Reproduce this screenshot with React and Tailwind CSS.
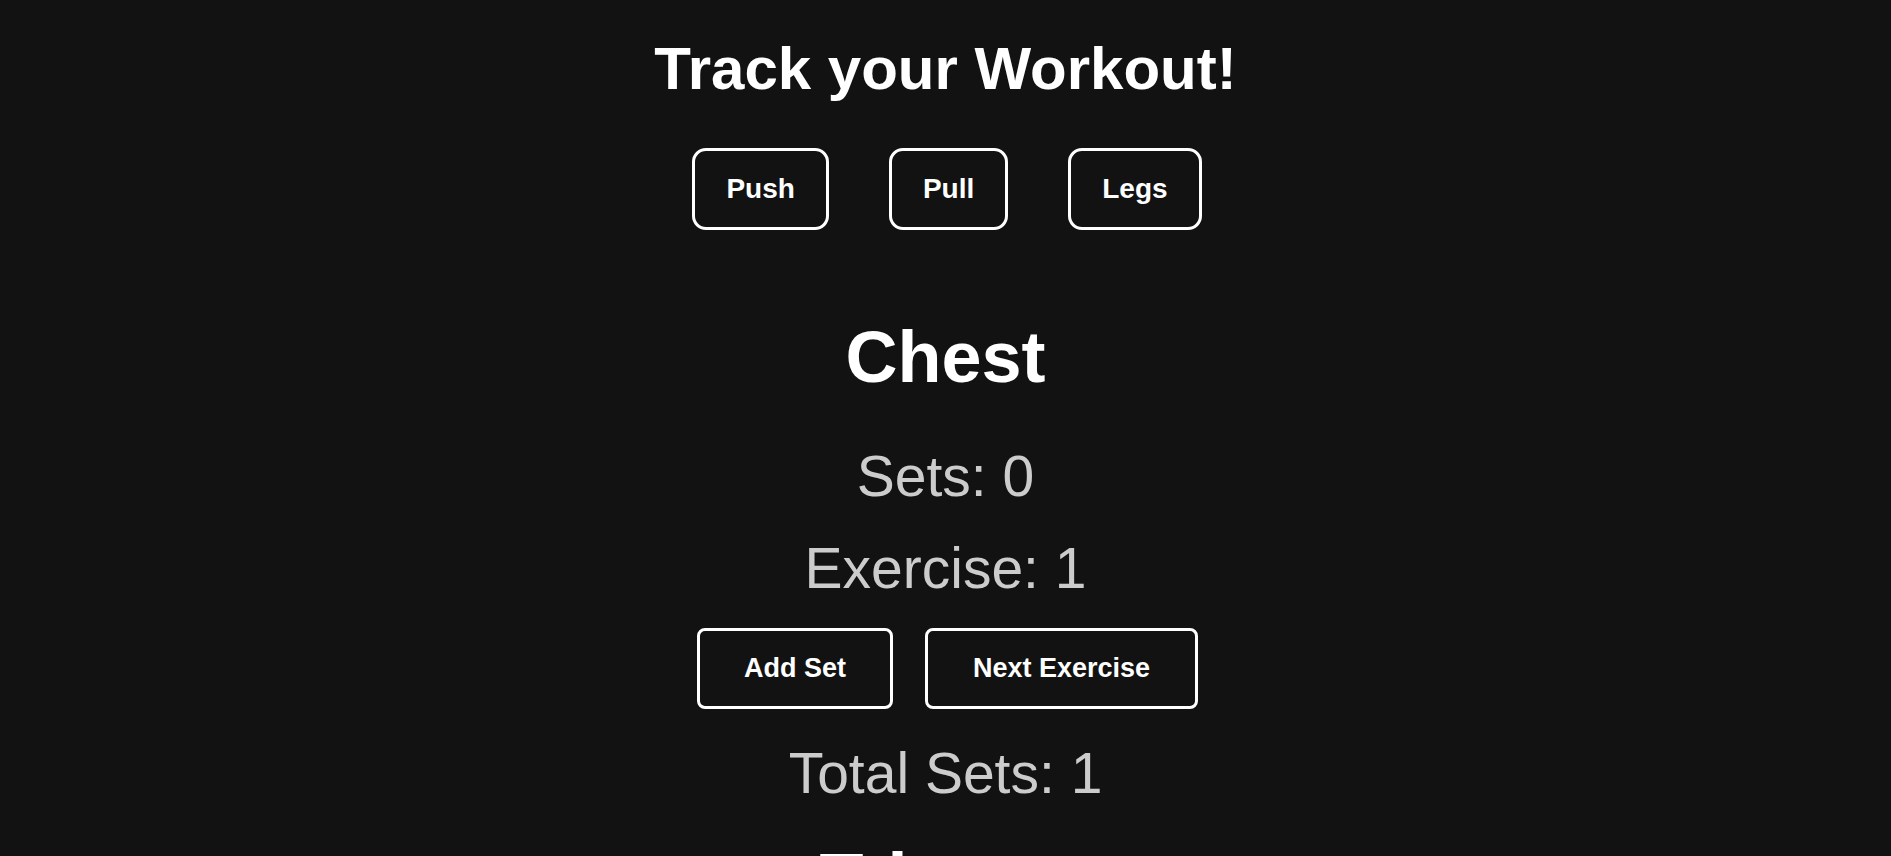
import { useState } from "react";

const SPLITS = ["Push", "Pull", "Legs"];

export default function App() {
  const [split, setSplit] = useState("Push");
  const [sets, setSets] = useState(0);
  const [exercise, setExercise] = useState(1);
  const [totalSets, setTotalSets] = useState(1);

  return (
    <div className="min-h-screen bg-[#121212] text-white font-['Liberation_Sans',Arial,sans-serif] flex flex-col items-center overflow-hidden">
      <h1 className="mt-[39px] text-[60px] leading-[60px] font-bold">
        Track your Workout!
      </h1>

      <div className="mt-[49px] flex gap-[60px] pl-[3px]">
        {SPLITS.map((s) => (
          <button
            key={s}
            onClick={() => setSplit(s)}
            className="border-[3px] border-white rounded-[14px] px-[31px] py-6 text-[28px] leading-[28px] font-bold bg-transparent text-white"
          >
            {s}
          </button>
        ))}
      </div>

      <h2 className="mt-[91px] text-[72px] leading-[72px] font-bold">Chest</h2>
      <p className="mt-[55px] text-[57px] leading-[56px] text-[#cccccc]">
        Sets: {sets}
      </p>
      <p className="mt-[36px] text-[57px] leading-[56px] text-[#cccccc]">
        Exercise: {exercise}
      </p>

      <div className="mt-[32px] flex gap-[32px] pl-[4px]">
        <button
          onClick={() => {
            setSets(sets + 1);
            setTotalSets(totalSets + 1);
          }}
          className="border-[3px] border-white rounded-lg px-[44px] py-6 text-[27px] leading-[27px] font-bold text-white"
        >
          Add Set
        </button>
        <button
          onClick={() => {
            setExercise(exercise + 1);
            setSets(0);
          }}
          className="border-[3px] border-white rounded-lg px-[45px] py-6 text-[27px] leading-[27px] font-bold text-white"
        >
          Next Exercise
        </button>
      </div>

      <p className="mt-[36px] text-[57px] leading-[56px] text-[#cccccc]">
        Total Sets: {totalSets}
      </p>

      <h2 className="mt-[42px] text-[72px] leading-[72px] font-bold">
        Triceps
      </h2>
    </div>
  );
}
